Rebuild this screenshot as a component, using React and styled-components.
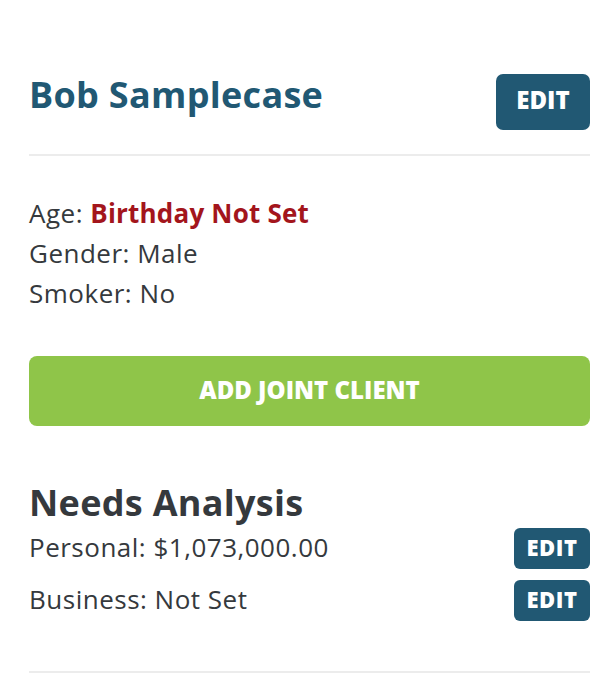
import styled, { createGlobalStyle } from 'styled-components'

const GlobalStyle = createGlobalStyle`
	body {
		margin: 0;
		background: #fff;
		font-family: 'Open Sans', Lato, sans-serif;
		color: #35393d;
	}
`

const Page = styled.div`
	padding: 74px 22px 0 29px;
	display: flex;
	flex-direction: column;
`

const Header = styled.div`
	display: flex;
	justify-content: space-between;
	align-items: flex-start;
	padding-bottom: 24px;
	border-bottom: 2px solid #ececec;
`

const Name = styled.h1`
	margin: 0;
	padding-top: 1px;
	font-size: 36px;
	line-height: 40px;
	font-weight: 700;
	letter-spacing: 0.3px;
	color: #215873;
`

const EditButton = styled.button`
	border: none;
	background: #215873;
	color: #fff;
	font-family: inherit;
	font-weight: 800;
	text-transform: uppercase;
	border-radius: ${(p) => (p.small ? '6px' : '7px')};
	width: ${(p) => (p.small ? '76px' : '94px')};
	height: ${(p) => (p.small ? '41px' : '56px')};
	font-size: ${(p) => (p.small ? '22px' : '24px')};
	letter-spacing: ${(p) => (p.small ? '0.5px' : '0')};
	padding: 0 0 ${(p) => (p.small ? '3px' : '5px')};
	cursor: pointer;
`

const Details = styled.div`
	display: flex;
	flex-direction: column;
	padding-top: 37px;
	font-size: 26px;
	line-height: 40px;
	letter-spacing: 0.5px;
`

const Warning = styled.span`
	color: #a3151c;
	font-weight: 700;
	letter-spacing: 0.2px;
`

const JointButton = styled.button`
	margin-top: 43px;
	height: 70px;
	border: none;
	border-radius: 8px;
	background: #8fc549;
	color: #fff;
	font-family: inherit;
	font-size: 24px;
	font-weight: 800;
	text-transform: uppercase;
	padding: 0 0 4px;
	cursor: pointer;
`

const Section = styled.div`
	display: flex;
	flex-direction: column;
	padding-top: 57px;
	padding-bottom: 50px;
	border-bottom: 2px solid #ececec;
`

const SectionTitle = styled.h2`
	margin: 0;
	font-size: 36px;
	line-height: 40px;
	font-weight: 700;
	letter-spacing: 0.3px;
	color: #35393d;
`

const Row = styled.div`
	display: flex;
	justify-content: space-between;
	align-items: flex-start;
	margin-top: ${(p) => p.gap};
	font-size: 26px;
	line-height: 36px;
	letter-spacing: 0.5px;
`

const Value = styled.span`
	padding-top: 1px;
`

export default function App() {
	return (
		<>
			<GlobalStyle />
			<Page>
				<Header>
					<Name>Bob Samplecase</Name>
					<EditButton>Edit</EditButton>
				</Header>
				<Details>
					<div>
						Age: <Warning>Birthday Not Set</Warning>
					</div>
					<div>Gender: Male</div>
					<div>Smoker: No</div>
				</Details>
				<JointButton>Add Joint Client</JointButton>
				<Section>
					<SectionTitle>Needs Analysis</SectionTitle>
					<Row gap='5px'>
						<Value>Personal: $1,073,000.00</Value>
						<EditButton small>Edit</EditButton>
					</Row>
					<Row gap='11px'>
						<Value>Business: Not Set</Value>
						<EditButton small>Edit</EditButton>
					</Row>
				</Section>
			</Page>
		</>
	)
}
